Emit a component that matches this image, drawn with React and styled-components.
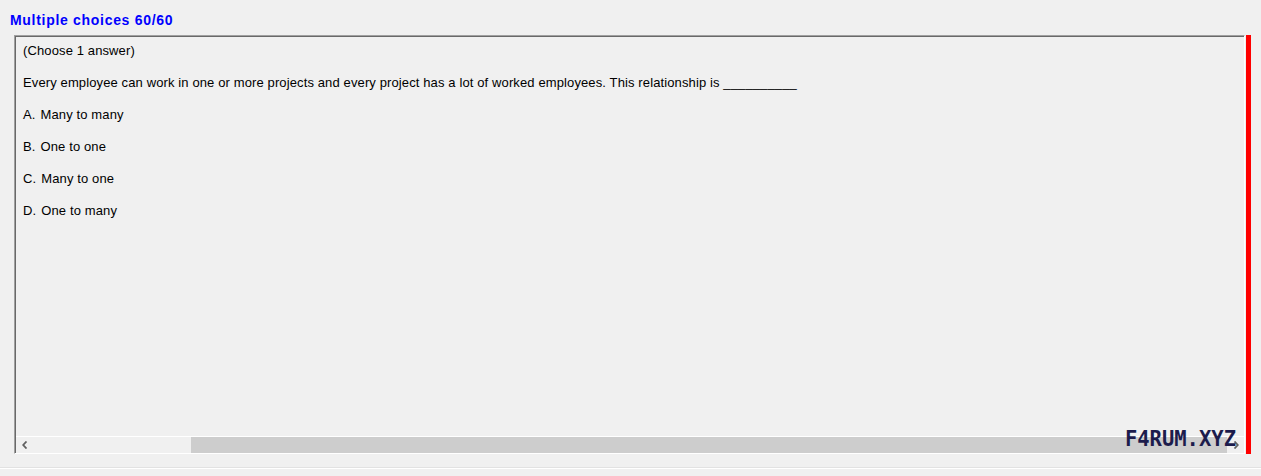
import styled, { createGlobalStyle } from 'styled-components';

const questionText =
  'Every employee can work in one or more projects and every project has a lot of worked employees. This relationship is __________';

const choices = [
  { key: 'A.', text: 'Many to many' },
  { key: 'B.', text: 'One to one' },
  { key: 'C.', text: 'Many to one' },
  { key: 'D.', text: 'One to many' },
];

const Chevron = ({ dir }) => (
  <svg width="6" height="8" viewBox="0 0 6 8">
    <path
      d={dir === 'left' ? 'M4.5 0.5 L1.2 4 L4.5 7.5' : 'M1.5 0.5 L4.8 4 L1.5 7.5'}
      fill="none"
      stroke="#606060"
      strokeWidth="1.8"
    />
  </svg>
);

const App = () => {
  return (
    <>
      <GlobalStyle />
      <Page>
        <Title>Multiple choices 60/60</Title>

        <QuestionRow>
          <Panel>
            <Content>
              <Line>(Choose 1 answer)</Line>
              <Line>{questionText}</Line>
              {choices.map(choice => (
                <Line key={choice.key}>
                  <ChoiceKey>{choice.key}</ChoiceKey>
                  {choice.text}
                </Line>
              ))}
            </Content>

            <ScrollBar>
              <ArrowButton>
                <Chevron dir="left" />
              </ArrowButton>
              <Track>
                <Thumb />
              </Track>
              <ArrowButton>
                <Chevron dir="right" />
              </ArrowButton>
            </ScrollBar>

            <Watermark>F4RUM.XYZ</Watermark>
          </Panel>
          <StatusBar />
        </QuestionRow>

        <Footer />
      </Page>
    </>
  );
};

export default App;

const GlobalStyle = createGlobalStyle`
  html, body {
    margin: 0;
    padding: 0;
    background: #f0f0f0;
  }

  body {
    font-family: 'Liberation Sans', Arial, sans-serif;
    font-size: 13px;
    color: #000;
  }
`;

const Page = styled.div`
  width: 1261px;
  height: 476px;
  overflow: hidden;
  background: #f0f0f0;
`;

const Title = styled.div`
  box-sizing: border-box;
  height: 35px;
  padding: 12px 0 0 10px;
  font-family: 'Liberation Sans', Arial, sans-serif;
  font-size: 14px;
  font-weight: 700;
  line-height: 16px;
  letter-spacing: 0.7px;
  color: #0000ff;
`;

const QuestionRow = styled.div`
  display: flex;
  gap: 1px;
  height: 419px;
  margin: 0 10px 0 14px;
`;

const Panel = styled.div`
  position: relative;
  flex: 1;
  display: flex;
  flex-direction: column;
  box-sizing: border-box;
  border-top: 1px solid #a0a0a0;
  border-left: 1px solid #a0a0a0;
  border-right: 1px solid #ffffff;
  border-bottom: 1px solid #ffffff;
  box-shadow: inset 1px 1px 0 #696969;
`;

const Content = styled.div`
  flex: 1;
  display: flex;
  flex-direction: column;
  gap: 16px;
  padding: 7px 0 0 8px;
`;

const Line = styled.div`
  line-height: 16px;
  letter-spacing: 0.12px;
  white-space: nowrap;
`;

const ChoiceKey = styled.span`
  margin-right: 5px;
`;

const ScrollBar = styled.div`
  display: flex;
  height: 16px;
  margin-left: 1px;
  border-top: 1px solid #ffffff;
  background: #f0f0f0;
`;

const ArrowButton = styled.div`
  display: flex;
  align-items: center;
  justify-content: center;
  width: 17px;
  flex-shrink: 0;
`;

const Track = styled.div`
  flex: 1;
  display: flex;
  padding-left: 158px;
`;

const Thumb = styled.div`
  flex: 1;
  background: #cdcdcd;
`;

const Watermark = styled.div`
  position: absolute;
  right: 8px;
  bottom: 4px;
  font-family: 'DejaVu Sans Mono', 'Liberation Mono', monospace;
  font-size: 20.5px;
  font-weight: 700;
  color: #1c1c4c;
  line-height: 1;
`;

const StatusBar = styled.div`
  width: 5px;
  background: #ff0000;
`;

const Footer = styled.div`
  margin-top: 13px;
  height: 1px;
  border-top: 1px solid #e2e2e2;
  background: #ffffff;
`;
